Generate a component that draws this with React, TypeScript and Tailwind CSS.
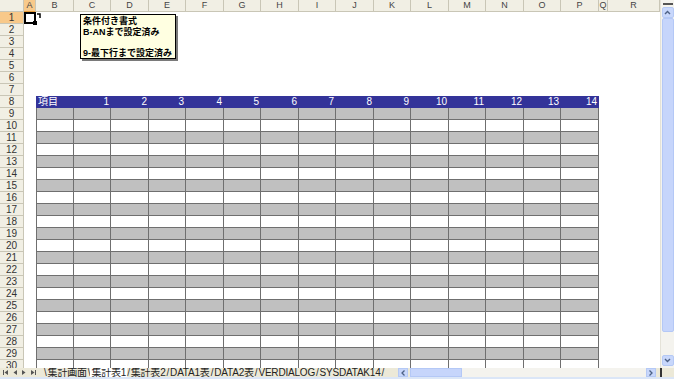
import React from "react";

const cols = ["A", "B", "C", "D", "E", "F", "G", "H", "I", "J", "K", "L", "M", "N", "O", "P", "Q", "R"];
const widths = [12, 38, 37, 38, 37, 38, 37, 38, 37, 38, 37, 38, 37, 38, 37, 38, 9, 52];
const rows = Array.from({ length: 30 }, (_, i) => i + 1);

const font = { fontFamily: '"Liberation Sans", "Noto Sans CJK JP", sans-serif' };

const Cell: React.FC<{ row: number; col: number }> = ({ row, col }) => {
  const w = widths[col];
  const inTable = col >= 1 && col <= 15;

  // row 8: blue header band
  if (row === 8 && inTable) {
    return (
      <div
        style={{ width: w }}
        className="h-[12px] bg-[#333399] text-white text-[10px] leading-[12px] flex items-center"
      >
        {col === 1 ? (
          <span className="pl-[2px]">項目</span>
        ) : (
          <span className="ml-auto pr-[2px]">{col - 1}</span>
        )}
      </div>
    );
  }

  if (row >= 9 && inTable) {
    const gray = row % 2 === 1;
    return (
      <div
        style={{ width: w }}
        className={`h-[12px] border-r border-b border-[#6f6f6f] ${col === 1 ? "border-l" : ""} ${
          gray ? "bg-[#c0c0c0]" : "bg-white"
        }`}
      />
    );
  }

  // selected A1
  if (row === 1 && col === 0) {
    return (
      <div style={{ width: w }} className="h-[12px] relative border-2 border-black bg-white">
        <div className="absolute -right-[3px] -bottom-[3px] w-[4px] h-[4px] bg-black" />
      </div>
    );
  }

  return <div style={{ width: w }} className="h-[12px] bg-white" />;
};

const VScroll = () => (
  <div className="w-[14px] h-full bg-[#f4f3ee] flex flex-col items-center border-l border-[#e4e2d8]">
    <div className="w-[10px] h-[2px] bg-[#555] mt-[3px]" />
    <div className="mt-[2px] w-[12px] h-[11px] rounded-[2px] bg-[#c8d7fb] border border-[#b5c9f5] flex items-center justify-center">
      <svg width="7" height="5" viewBox="0 0 7 5">
        <path d="M1 4 L3.5 1.5 L6 4" stroke="#4d6185" strokeWidth="1.4" fill="none" />
      </svg>
    </div>
    <div className="w-[12px] h-[314px] bg-[#c6d5fb] border border-[#b4c8f6] rounded-[2px]" />
    <div className="flex-1" />
    <div className="mb-[2px] w-[12px] h-[11px] rounded-[2px] bg-[#c8d7fb] border border-[#b5c9f5] flex items-center justify-center">
      <svg width="7" height="5" viewBox="0 0 7 5">
        <path d="M1 1 L3.5 3.5 L6 1" stroke="#4d6185" strokeWidth="1.4" fill="none" />
      </svg>
    </div>
  </div>
);

const tabs = ["集計画面", "集計表1", "集計表2", "DATA1表", "DATA2表", "VERDIALOG", "SYSDATAK14"];

const TabBar = () => (
  <div className="h-[9px] flex items-center bg-[#ece9d8] text-[10px] leading-[9px] text-[#222] overflow-visible">
    <div className="w-[44px] flex items-center gap-[5px] pl-[3px] text-[#555]">
      <svg width="5" height="5" viewBox="0 0 5 5"><path d="M0 0 H1 V5 H0 Z M5 0 L1.5 2.5 L5 5 Z" fill="#555" /></svg>
      <svg width="4" height="5" viewBox="0 0 4 5"><path d="M4 0 L0.5 2.5 L4 5 Z" fill="#555" /></svg>
      <svg width="4" height="5" viewBox="0 0 4 5"><path d="M0 0 L3.5 2.5 L0 5 Z" fill="#555" /></svg>
      <svg width="5" height="5" viewBox="0 0 5 5"><path d="M0 0 L3.5 2.5 L0 5 Z M4 0 H5 V5 H4 Z" fill="#555" /></svg>
    </div>
    <div className="flex items-center w-[354px] whitespace-nowrap tracking-[-0.2px]">
      <span className="text-[#333]">\</span>
      {tabs.map((t, i) => (
        <React.Fragment key={t}>
          <span className={i === 1 ? "underline bg-white px-[1px]" : "px-[1px]"}>{t}</span>
          <span className="text-[#333]">{i === 0 ? "\\" : "/"}</span>
        </React.Fragment>
      ))}
    </div>
    <div className="flex-1 h-full flex items-center">
      <div className="w-[10px] h-[9px] bg-[#c8d7fb] border border-[#b5c9f5] flex items-center justify-center">
        <svg width="4" height="6" viewBox="0 0 4 6"><path d="M3.5 0.5 L1 3 L3.5 5.5" stroke="#4d6185" strokeWidth="1.3" fill="none" /></svg>
      </div>
      <div className="w-[52px] h-[9px] bg-[#c6d5fb] border border-[#b4c8f6] ml-[2px]" />
      <div className="flex-1 h-[9px] bg-[#f4f3ee]" />
      <div className="w-[10px] h-[9px] bg-[#c8d7fb] border border-[#b5c9f5] flex items-center justify-center">
        <svg width="4" height="6" viewBox="0 0 4 6"><path d="M0.5 0.5 L3 3 L0.5 5.5" stroke="#4d6185" strokeWidth="1.3" fill="none" /></svg>
      </div>
      <div className="w-[4px]" />
      <div className="w-[2px] h-[9px] bg-[#333]" />
      <div className="w-[12px]" />
    </div>
  </div>
);

export default function App() {
  return (
    <div style={font} className="w-[674px] h-[379px] overflow-hidden bg-white flex flex-col select-none">
      <div className="h-[368px] flex">
        {/* sheet */}
        <div className="flex-1 relative overflow-hidden">
          {/* column headers */}
          <div className="flex h-[12px]">
            <div className="w-[24px] h-[12px] bg-[#f1efe4] border-r border-b border-[#c9c6b6]" />
            {cols.map((c, i) => (
              <div
                key={c}
                style={{ width: widths[i] }}
                className={`h-[12px] border-r border-b border-[#c9c6b6] text-[9px] leading-[11px] text-center text-[#444] ${
                  i === 0 ? "bg-[#f8c98a] border-b-[#e69b3a]" : "bg-[#f1efe4]"
                }`}
              >
                {c}
              </div>
            ))}
          </div>

          {/* rows */}
          {rows.map((r) => (
            <div key={r} className="flex h-[12px]">
              <div
                className={`w-[24px] h-[12px] border-r border-b border-[#c9c6b6] text-[10px] leading-[11px] text-center text-[#333] ${
                  r === 1 ? "bg-[#f8c98a]" : "bg-[#f1efe4]"
                }`}
              >
                {r}
              </div>
              {cols.map((c, i) => (
                <Cell key={c} row={r} col={i} />
              ))}
            </div>
          ))}

          {/* comment connector */}
          <svg className="absolute left-[36px] top-[12px]" width="46" height="8" viewBox="0 0 46 8">
            <path d="M1 2 H4 V6" stroke="#000" strokeWidth="1.5" fill="none" />
          </svg>

          {/* comment box */}
          <div className="absolute left-[80px] top-[14px] w-[96px] h-[45px] bg-[#ffffe1] border border-black shadow-[2px_2px_0_#7a7a7a] px-[2px] pt-[1px] text-[9px] leading-[10.5px] font-bold text-black whitespace-nowrap">
            <div>条件付き書式</div>
            <div>B-ANまで設定済み</div>
            <div>&nbsp;</div>
            <div>9-最下行まで設定済み</div>
          </div>
        </div>
        <VScroll />
      </div>
      <TabBar />
      <div className="h-[2px] bg-[#dbe6f7]" />
    </div>
  );
}
